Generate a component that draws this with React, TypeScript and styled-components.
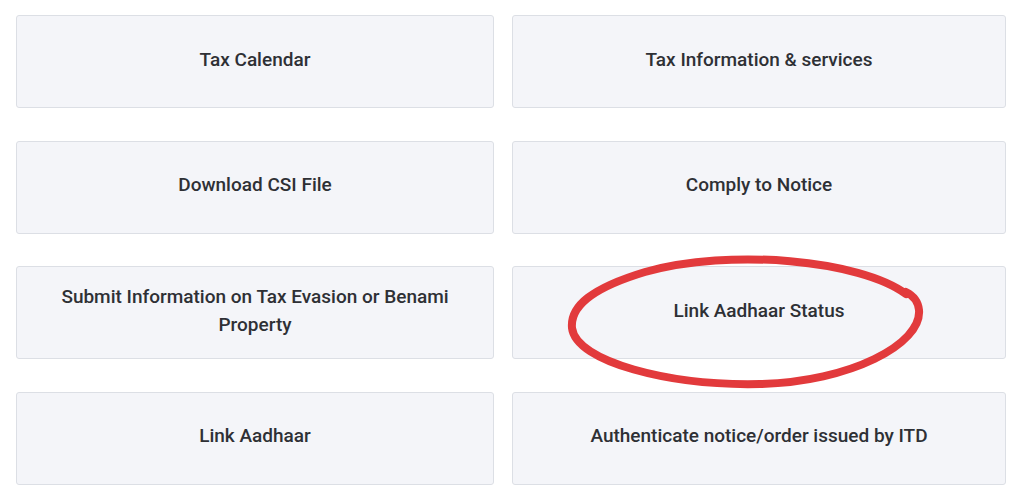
import styled, { createGlobalStyle } from "styled-components"

const GlobalStyle = createGlobalStyle`
  html, body {
    margin: 0;
    padding: 0;
    background: #ffffff;
  }
`

const Page = styled.div`
  position: relative;
  width: 1024px;
  height: 493px;
  padding: 15px 0 0 16px;
  box-sizing: border-box;
  font-family: Roboto, "Liberation Sans", sans-serif;
  overflow: hidden;
`

const Grid = styled.div`
  display: grid;
  grid-template-columns: 478px 494px;
  grid-auto-rows: 93px;
  column-gap: 18px;
  row-gap: 32.6px;
`

const Card = styled.div`
  display: flex;
  align-items: center;
  justify-content: center;
  padding: 0 30px 4px;
  box-sizing: border-box;
  background: #f4f5f9;
  border: 1px solid #dcdfe5;
  border-radius: 3px;
  text-align: center;
  color: #2e3035;
  font-size: 19px;
  font-weight: 500;
  line-height: 28px;
`

// red marker circle drawn over the "Link Aadhaar Status" card
const Marker = styled.svg`
  position: absolute;
  left: 560px;
  top: 250px;
  width: 370px;
  height: 142px;
  pointer-events: none;
`

const items = [
  "Tax Calendar",
  "Tax Information & services",
  "Download CSI File",
  "Comply to Notice",
  "Submit Information on Tax Evasion or Benami Property",
  "Link Aadhaar Status",
  "Link Aadhaar",
  "Authenticate notice/order issued by ITD",
]

export default function App() {
  return (
    <>
      <GlobalStyle />
      <Page>
        <Grid>
          {items.map((label) => (
            <Card key={label}>{label}</Card>
          ))}
        </Grid>
        <Marker viewBox="0 0 370 142">
          <path
            d="M 346 44 C 300 10, 170 -2, 85 22 C 32 38, 10 56, 12 78 C 16 112, 110 136, 200 134 C 290 132, 362 94, 359 60 C 358 50, 352 45, 346 42"
            fill="none"
            stroke="#e23a3c"
            strokeWidth="8"
            strokeLinecap="round"
            strokeLinejoin="round"
          />
        </Marker>
      </Page>
    </>
  )
}
